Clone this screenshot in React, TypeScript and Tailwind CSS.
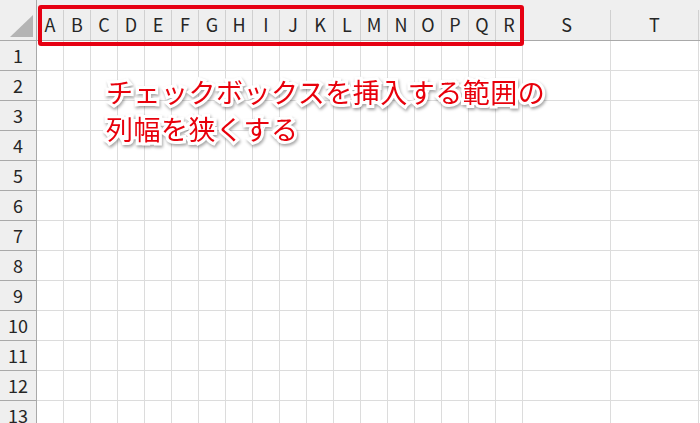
import React from 'react'

const narrowCols = ['A', 'B', 'C', 'D', 'E', 'F', 'G', 'H', 'I', 'J', 'K', 'L', 'M', 'N', 'O', 'P', 'Q', 'R']
const rows = Array.from({ length: 14 }, (_, i) => i + 1)

const font = "font-['Noto_Sans_CJK_JP','Noto_Sans',sans-serif]"

function HeaderCell({ label, wide }: { label: string; wide?: boolean }) {
  return (
    <div
      className={`${wide ? 'w-[88px]' : 'w-[27px]'} shrink-0 h-full flex items-end`}
    >
      <div className="h-[30px] w-full border-r border-[#d0d0d0] flex items-center justify-center pb-[1px] text-[18px] text-[#262626]">
        {label}
      </div>
    </div>
  )
}

function GridRow({ n }: { n: number }) {
  return (
    <div className="flex h-[30px] shrink-0">
      <div className="w-[37px] shrink-0 bg-[#efefef] border-r border-b border-[#a9a9a9] flex items-center justify-center text-[18px] text-[#262626]">
        {n}
      </div>
      {narrowCols.map((c) => (
        <div key={c} className="w-[27px] shrink-0 border-r border-b border-[#dcdcdc]" />
      ))}
      <div className="w-[88px] shrink-0 border-r border-b border-[#dcdcdc]" />
      <div className="w-[88px] shrink-0 border-r border-b border-[#dcdcdc]" />
      <div className="flex-1 border-b border-[#dcdcdc]" />
    </div>
  )
}

export default function App() {
  return (
    <div className={`relative w-[700px] h-[423px] overflow-hidden bg-white ${font}`}>
      {/* Column header */}
      <div className="flex h-[41px] bg-[#efefef] border-b border-[#a9a9a9]">
        <div className="w-[37px] shrink-0 h-full border-r border-[#a9a9a9] flex items-end justify-end pr-[3px] pb-[3px]">
          <svg width="23" height="22" viewBox="0 0 23 22">
            <polygon points="23,0 23,22 0,22" fill="#b4b4b4" />
          </svg>
        </div>
        {narrowCols.map((c) => (
          <HeaderCell key={c} label={c} />
        ))}
        <HeaderCell label="S" wide />
        <HeaderCell label="T" wide />
        <div className="flex-1" />
      </div>

      {/* Rows */}
      <div className="flex flex-col">
        {rows.map((n) => (
          <GridRow key={n} n={n} />
        ))}
      </div>

      {/* Highlight box over narrow columns */}
      <div className="absolute left-[38px] top-[5px] w-[486px] h-[41px] border-[4px] border-[#e60012] rounded-[3px]" />

      {/* Annotation */}
      <div className="absolute left-[106px] top-[73px] text-[27px] leading-[37px] tracking-[0.5px] text-[#e8000b] [-webkit-text-stroke:6px_white] [paint-order:stroke_fill] drop-shadow-[1px_2px_1.5px_rgba(0,0,0,0.35)]">
        <div>チェックボックスを挿入する範囲の</div>
        <div>列幅を狭くする</div>
      </div>
    </div>
  )
}
